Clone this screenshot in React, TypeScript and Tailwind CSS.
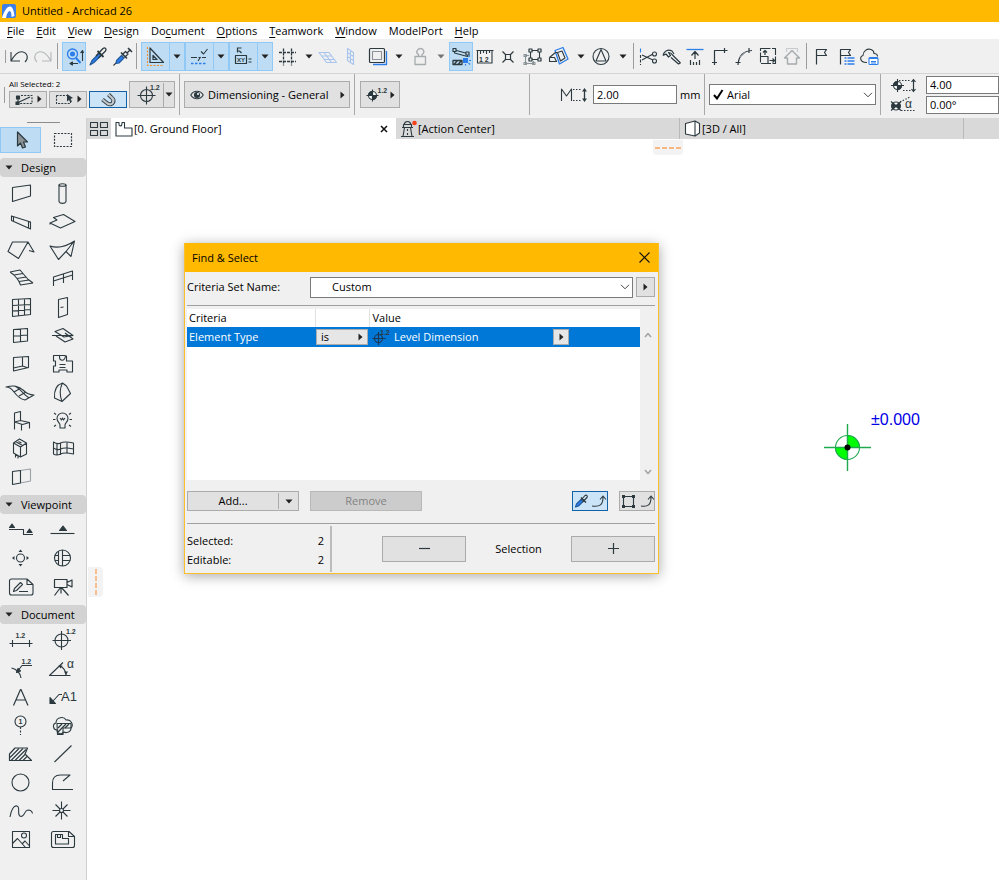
import type { ReactNode } from 'react';
import clsx from 'clsx';

const INK = '#2c3a40';
const BLUE = '#2b7de9';

/* ---------- shared bits ---------- */

function Svg({ w, h, children, stroke = INK }: { w: number; h: number; children: ReactNode; stroke?: string }) {
  return (
    <svg width={w} height={h} viewBox={`0 0 ${w} ${h}`} fill="none" stroke={stroke} strokeWidth="1.1" strokeLinejoin="round" className="block shrink-0" aria-hidden="true">
      {children}
    </svg>
  );
}

function Down() {
  return (
    <Svg w={8} h={5}>
      <path d="M0.5 0.5h7L4 4.5z" fill="#222" stroke="none" />
    </Svg>
  );
}

function Right() {
  return (
    <Svg w={5} h={8}>
      <path d="M0.5 0.5v7L4.5 4z" fill="#222" stroke="none" />
    </Svg>
  );
}

function Chevron() {
  return (
    <svg width="10" height="6" viewBox="0 0 10 6" fill="none" stroke="#444" className="pointer-events-none absolute right-[3px] top-1/2 -translate-y-1/2" aria-hidden="true">
      <path d="M1 0.8l4 4 4-4" />
    </svg>
  );
}

function Tiny({ x, y, children, size = 7 }: { x: number; y: number; children: ReactNode; size?: number }) {
  return (
    <text x={x} y={y} fontSize={size} fontWeight="700" fill={INK} stroke="none" fontFamily="Liberation Sans, sans-serif">
      {children}
    </text>
  );
}

/* ---------- menu ---------- */

const menus = [
  ['', 'F', 'ile'],
  ['', 'E', 'dit'],
  ['', 'V', 'iew'],
  ['', 'D', 'esign'],
  ['Do', 'c', 'ument'],
  ['', 'O', 'ptions'],
  ['', 'T', 'eamwork'],
  ['', 'W', 'indow'],
  ['ModelPort', '', ''],
  ['', 'H', 'elp'],
];

function MenuBar() {
  return (
    <nav className="flex h-[17px] items-center gap-3 bg-white pl-[7px]">
      {menus.map(([a, b, c]) => (
        <button key={a + b + c} className="whitespace-nowrap leading-4">
          {a}
          <span className="underline underline-offset-2">{b}</span>
          {c}
        </button>
      ))}
    </nav>
  );
}

/* ---------- toolbar ---------- */

function Tool({ label, active, children, stroke }: { label: string; active?: boolean; children: ReactNode; stroke?: string }) {
  return (
    <button aria-label={label} className={clsx('h-[29px] w-6 shrink-0', active && 'bg-[#bedcf3] outline outline-1 -outline-offset-1 outline-[#90c8f6]')}>
      <Svg w={24} h={29} stroke={stroke}>{children}</Svg>
    </button>
  );
}

function Caret({ label, dim }: { label: string; dim?: boolean }) {
  return (
    <button aria-label={label} className={clsx('flex h-[29px] w-4 shrink-0 items-center justify-center', dim && 'opacity-60')}>
      <Down />
    </button>
  );
}

function SplitTool({ label, children }: { label: string; children: ReactNode }) {
  return (
    <div className="flex h-[29px] shrink-0 border border-[#90c8f6] bg-[#bedcf3]">
      <button aria-label={label} className="flex w-7 items-center justify-center border-r border-[#90c8f6]">
        <Svg w={24} h={27}>{children}</Svg>
      </button>
      <button aria-label={`${label} options`} className="flex w-[14px] items-center justify-center">
        <Down />
      </button>
    </div>
  );
}

function Sep() {
  return <div className="mx-[2px] h-[26px] w-px shrink-0 bg-[#9c9c9c]" />;
}

function Gap() {
  return <div className="w-[2px] shrink-0" />;
}

function Toolbar() {
  return (
    <div className="flex h-[34px] items-center overflow-hidden bg-[#f0f0f0] pl-[5px]">
      <div className="mr-px h-[13px] w-px bg-[#9c9c9c]" />
      <Tool label="Undo">
        <path d="M4 10v9h9M4 19C8 12 12 9 16 10c5 1.5 5.5 7 2 10" />
      </Tool>
      <Tool label="Redo" stroke="#b4b8ba">
        <path d="M20 10v9h-9M20 19C16 12 12 9 8 10c-5 1.5-5.5 7-2 10" />
      </Tool>
      <Sep />
      <Gap />
      <Tool label="Zoom to selection" active>
        <circle cx="10.5" cy="12" r="5" stroke={BLUE} strokeWidth="1.3" />
        <circle cx="10.5" cy="12" r="2.5" fill={BLUE} stroke="none" />
        <path d="M14 16l4.5 5" stroke={BLUE} strokeWidth="2" />
        <path d="M20.5 19v-9M18.5 11l2-2.5 1 2.5M16 21.5H9M10.5 20L8 21.5l2.5 1.5z" fill={INK} />
      </Tool>
      <Tool label="Pick up parameters">
        <path d="M4 23l2-4.500 7-7 2 2-7 7z" fill={BLUE} stroke="#23599c" />
        <path d="M11.5 9l6 6" strokeWidth="1.800" />
        <path d="M10 14l7-7.5c2-1.5 4 .5 2.5 2.5L12.5 16" strokeWidth="1.3" />
      </Tool>
      <Tool label="Inject parameters">
        <path d="M3.5 23.5l4-4" />
        <path d="M6.5 18.5l5-5 2.5 2.5-5 5-3 .5z" fill={BLUE} stroke="#23599c" />
        <path d="M12 13l3.5-3.5L18 12l-3.5 3.5M17 11l3.5-3.5" strokeWidth="1.3" />
        <path d="M18 6l4 4M11 10.5l6 6" strokeWidth="1.6" />
      </Tool>
      <Sep />
      <Gap />
      <SplitTool label="Guide lines">
        <path d="M6 5v14.5h13.5zM9 12.5v4h4z" strokeWidth="1.2" />
        <path d="M3.5 4v18.5H20" stroke="#f28c28" strokeDasharray="2 1.5" />
      </SplitTool>
      <SplitTool label="Snap guides">
        <path d="M3 14.5h6M10.5 14.5h2M14 14.5h4M13 8.500l2.500 2.500 4-5" />
        <path d="M10 18l2.5-4" />
        <path d="M3 20.5h15" stroke={BLUE} strokeDasharray="2.5 1.5" strokeWidth="1.3" />
      </SplitTool>
      <SplitTool label="Tracker">
        <path d="M5.5 4.500v5M5 5h4.500M5.500 8h2L9.500 10M3.500 12.500h11v8h-11z" strokeWidth="1.2" />
        <Tiny x={5} y={19} size={6}>XY</Tiny>
        <path d="M16.5 16h3M16.5 19h3" />
      </SplitTool>
      <Gap />
      <Tool label="Grid snap">
        <path d="M8.5 6.5v17M16.5 6.5v17M4 10.5h17M4 19.500h17" strokeDasharray="3 1" strokeWidth="1.3" />
      </Tool>
      <Gap />
      <Caret label="Grid snap options" />
      <Tool label="Editing plane" stroke="#a9c5ee">
        <path d="M2 10.5h10l7.5 10h-10zM4.5 14h10M7 17.500h10M7 10.5l7.5 10" />
      </Tool>
      <Tool label="Vertical plane" stroke="#a9c5ee">
        <path d="M6.5 6.5l6 4v12l-6-4zM9.5 8.5v12M6.5 10.5l6 4M6.5 14.5l6 4" />
      </Tool>
      <Gap />
      <Tool label="Trace reference">
        <path d="M6 22.5h13.5V9" stroke={BLUE} strokeWidth="1.3" />
        <rect x="2.5" y="6.5" width="15" height="14" rx="1" strokeWidth="1.2" />
        <rect x="5.5" y="9.5" width="9" height="8" stroke="#8b9499" />
      </Tool>
      <Caret label="Trace options" />
      <Gap />
      <Tool label="Gravity" stroke="#a6abad">
        <path d="M6 14.5h10.5v8H6zM9.5 14.5v-2c-3.5-2-1-6 2-6s5 4 1.5 6v2" strokeWidth="1.3" />
      </Tool>
      <Caret label="Gravity options" dim />
      <Tool label="Suspend groups" active>
        <path d="M5.5 8l13 3.5v3L5.5 11z" />
        <path d="M4 6.5h3v3H4zM17 10h3v3h-3z" fill="#bedcf3" strokeWidth="1.2" />
        <path d="M4 18.5h9v4H4zM5 22.500l3.500-4M9 22.500l3.500-4" strokeWidth="1.3" />
        <rect x="14" y="16" width="5" height="5" fill={BLUE} stroke="none" />
        <path d="M19.5 15l1.5-1.500M19.500 21l1.500 1.500M20 18.500h2M16.500 22v1.500" stroke={BLUE} />
      </Tool>
      <Tool label="Measure">
        <path d="M4.5 8.5V21H19V8.5M3.5 8.5h17M7.5 8.5V12M10.5 8.5V11M13.5 8.5V12M16.5 8.5V11" />
        <Tiny x={6} y={19.5} size={7}>1 2</Tiny>
      </Tool>
      <Tool label="Intersect">
        <path d="M5.5 9.5l3 3M13.500 17.500l3 3M16.5 9.5l-3 3M8.500 17.500l-3 3M8.5 12.500h5v5h-5z" strokeWidth="1.2" />
      </Tool>
      <Tool label="Group">
        <path d="M9.5 8.5h9v9h-9z" />
        <path d="M8 7h3v3H8zM17 7h3v3h-3zM8 16h3v3H8zM17 16h3v3h-3z" fill="#f0f0f0" strokeWidth="1.2" />
        <path d="M4.500 13.5H8M4.5 13v8.5h8V19M3 12.5h2.5v2H3zM3 20.5h2.5v2H3zM11.5 20.500H14v2h-2.500z" stroke="#8b9499" />
      </Tool>
      <Gap />
      <Tool label="Cutaway">
        <path d="M8 8.5l8-3L21 17l-8.500 5z" stroke={BLUE} strokeWidth="1.3" />
        <path d="M2.5 15.5l6-5H10M2.5 15.5v4H10M2.5 15.5h5l2 4M10.5 10.500L15 9l3 7-4.500 3z" />
      </Tool>
      <Gap />
      <Caret label="Cutaway options" />
      <Tool label="Triangle marker">
        <circle cx="12" cy="14.5" r="8" />
        <path d="M12 7.5L17 19H7z" />
      </Tool>
      <Gap />
      <Caret label="Marker options" />
      <Sep />
      <Tool label="Split">
        <path d="M4.5 6.5v4" stroke={BLUE} />
        <path d="M4.5 13v10" strokeDasharray="3 1.5" />
        <path d="M6 13l11 5M6 18l11-6" />
        <circle cx="18.5" cy="12" r="2" />
        <circle cx="18.5" cy="19" r="2" />
      </Tool>
      <Tool label="Adjust">
        <path d="M3 13.500l3-1.500 2.500 3 2-1.500L8.500 10.500c2 0 3 .5 4 2.500l8 8M3 13.500C4 9 8 7 12 9l2 3M11 15.500l7.500 6.500 2-1" strokeWidth="1.2" />
      </Tool>
      <Tool label="Elevate">
        <path d="M2.5 7.5h17" stroke={BLUE} strokeWidth="1.3" />
        <path d="M11 17v-7M7.5 13.5l3.5-4 3.5 4M6.5 18v5M9.5 20v3M12.5 20v3M15.500 18v5" strokeWidth="1.2" />
      </Tool>
      <Tool label="Corner">
        <path d="M6.5 23V8.5h13M16.5 6v5M4 20.5h5" strokeWidth="1.2" />
      </Tool>
      <Tool label="Fillet">
        <path d="M6 23C6.500 15 10 9 20 8.500M17 6v5M3.500 20.500h5" strokeWidth="1.2" />
        <path d="M8 15l6-5.500" stroke="#8b9499" />
      </Tool>
      <Tool label="Resize">
        <path d="M4.5 6.5h15v15h-15z" strokeDasharray="10 1.5" />
        <path d="M4.5 14.500H12v7M9 13V8.5M7 10.5l2-2 2 2M13.5 18.5h5M16.5 16.5l2 2-2 2" strokeWidth="1.2" />
      </Tool>
      <Tool label="Roof trim" stroke="#a6abad">
        <path d="M6.500 10V6.5h11V10" stroke="#c8cbcc" />
        <path d="M7.5 22v-6h-3L12 8.5l7.500 7.500h-3v6z" strokeWidth="1.4" />
      </Tool>
      <Sep />
      <Tool label="Flag">
        <path d="M7.5 22.500v-15h10l-2 3 2 3h-10" strokeWidth="1.2" />
      </Tool>
      <Tool label="Issue list">
        <path d="M7.5 22.500v-15h10l-2 3 2 3h-10" strokeWidth="1.2" />
        <path d="M14.500 16h7M14.500 19h7M14.500 22h7M11.500 16h2M11.500 19h2M11.500 22h2" stroke={BLUE} strokeWidth="1.6" />
      </Tool>
      <Tool label="Cloud issues">
        <path d="M10 20.5c-7 .5-8-6-4-7 0-4 4-7.5 8-6 2 .7 3 2 3 4 2 0 3.500 1 3.500 3" />
        <rect x="12" y="15.500" width="9" height="7" rx="1" stroke={BLUE} fill="#fff" />
        <path d="M12 16.500h9M14 19.500h5M14 21h5" stroke={BLUE} strokeWidth="1.2" />
      </Tool>
    </div>
  );
}

/* ---------- info box ---------- */

const grayButton = 'flex items-center border border-[#ababab] bg-[#e1e1e1]';
const field = 'min-w-0 border border-[#7a7a7a] bg-white px-[3px] leading-4 outline-none';

function Rule() {
  return <div className="h-[41px] w-px shrink-0 self-start bg-[#a8a8a8]" />;
}

function InfoBar() {
  return (
    <div className="flex h-[45px] items-center overflow-hidden border-t border-[#d4d4d4] bg-[#f0f0f0] pb-[3px] pl-1">
      <div className="h-4 w-px shrink-0 bg-[#9c9c9c]" />
      <div className="ml-1 flex shrink-0 flex-col pb-[3px]">
        <span className="h-3 whitespace-nowrap text-[8px] leading-[10px]">All Selected: 2</span>
        <div className="flex gap-[2px]">
          <button aria-label="Selected elements" className={clsx(grayButton, 'h-[17px] w-[38px] justify-between px-1')}>
            <Svg w={22} h={13}>
              <path d="M4 4v5M4 9.5L16 4" />
              <path d="M2.5 3h3v3h-3z" fill={INK} />
              <rect x="2" y="9" width="3" height="2.5" fill={INK} />
              <path d="M7 2.5h11v8H6" strokeDasharray="2 1.2" />
            </Svg>
            <Right />
          </button>
          <button aria-label="Marquee selection" className={clsx(grayButton, 'h-[17px] w-[38px] justify-between px-1')}>
            <Svg w={22} h={13}>
              <path d="M2.5 2.5h11M2.5 2.5v8h14V9" strokeDasharray="2 1.2" />
              <path d="M13 1l6 4-2.500 1 1.500 2.500-1.500 1L15 7l-2 1.500z" fill={INK} stroke="none" />
            </Svg>
            <Right />
          </button>
          <button aria-label="Magnet" aria-pressed="true" className="flex h-[17px] w-[38px] items-center justify-center border border-[#1362a5] bg-[#cce4f7]">
            <Svg w={20} h={15}>
              <path d="M4.5 7.5l5 4c5 3 8-3 4-6l-3-3" strokeWidth="4" />
              <path d="M4.5 7.5l5 4c5 3 8-3 4-6l-3-3" stroke="#c2c9cd" strokeWidth="2.2" />
            </Svg>
          </button>
        </div>
      </div>
      <button aria-label="Level dimension settings" className={clsx(grayButton, 'ml-[2px] h-[27px] w-[46px] shrink-0')}>
        <span className="ml-[6px] flex w-[28px] border-r border-[#ababab]">
          <Svg w={27} h={24}>
            <circle cx="10.5" cy="12.5" r="6" />
            <path d="M10.5 3.5v18M1.5 12.5h18" />
            <Tiny x={14} y={7}>1.2</Tiny>
          </Svg>
        </span>
        <span className="ml-px"><Down /></span>
      </button>
      <div className="w-1 shrink-0" />
      <Rule />
      <button className={clsx(grayButton, 'ml-1 h-[27px] w-[166px] shrink-0 pl-[5px] pr-1')}>
        <Svg w={14} h={12}>
          <path d="M0.8 6C3.5 1 10.5 1 13.2 6 10.5 11 3.5 11 .8 6z" />
          <circle cx="7" cy="6" r="2.5" fill={INK} />
          <circle cx="8" cy="5" r="1" fill="#fff" stroke="none" />
        </Svg>
        <span className="ml-1 flex-1 whitespace-nowrap text-left">Dimensioning - General</span>
        <Right />
      </button>
      <div className="w-1 shrink-0" />
      <Rule />
      <button aria-label="Marker type" className={clsx(grayButton, 'ml-[5px] h-[27px] w-10 shrink-0 justify-between px-1')}>
        <Svg w={24} h={20}>
          <circle cx="7.5" cy="10.5" r="4" fill="#fff" />
          <path d="M7.5 10.5v-4a4 4 0 0 0-4 4zM7.500 10.500v4a4 4 0 0 0 4-4z" fill={INK} />
          <path d="M7.5 4.5v12M1.5 10.5h12" />
          <Tiny x={12.5} y={8} size={7}>1.2</Tiny>
        </Svg>
        <Right />
      </button>
      <div className="w-[129px] shrink-0" />
      <Rule />
      <label htmlFor="height" className="ml-[30px] mr-[5px] shrink-0" aria-label="Marker height">
        <Svg w={28} h={18}>
          <path d="M1.5 15V3l5 7 5-7v12" />
          <path d="M13 3.500h8M13 14.500h8" strokeDasharray="1.5 1.5" />
          <path d="M24.5 4v10" strokeWidth="1.3" />
          <path d="M24.5 2l2.500 3.500h-5zM24.500 16l2.500-3.500h-5z" fill={INK} stroke="none" />
        </Svg>
      </label>
      <input id="height" defaultValue="2.00" className={clsx(field, 'h-[19px] w-[84px] shrink-0')} />
      <span className="ml-[3px] w-6 shrink-0">mm</span>
      <Rule />
      <div className="relative ml-1 h-[21px] w-[167px] shrink-0">
        <select aria-label="Font" className="h-full w-full appearance-none border border-[#7a7a7a] bg-white pl-[17px] leading-4 outline-none">
          <option>Arial</option>
        </select>
        <svg width="11" height="11" viewBox="0 0 11 11" fill="none" stroke="#000" strokeWidth="2" className="pointer-events-none absolute left-1 top-[5px]" aria-hidden="true">
          <path d="M1 6l3 3.5L9.5 1" />
        </svg>
        <Chevron />
      </div>
      <div className="w-1 shrink-0" />
      <Rule />
      <div className="ml-2 flex min-w-[110px] flex-1 flex-col gap-[2px]">
        <div className="flex">
          <label htmlFor="marker-size" aria-label="Marker size" className="w-[37px] shrink-0">
            <Svg w={30} h={18}>
              <circle cx="8.5" cy="9.5" r="4" fill="#fff" />
              <path d="M8.5 9.5v-4a4 4 0 0 0-4 4zM8.500 9.500v4a4 4 0 0 0 4-4z" fill={INK} />
              <path d="M2 9.5h13M8.5 3v13" />
              <path d="M10 4.500h12M14 14.500h8" strokeDasharray="1.5 1.5" />
              <path d="M24.500 4v11M22.500 6l2-2.500 2 2.500M22.500 13l2 2.500 2-2.500" strokeWidth="1.2" />
            </Svg>
          </label>
          <input id="marker-size" defaultValue="4.00" className={clsx(field, 'h-[18px] flex-1')} />
        </div>
        <div className="flex">
          <label htmlFor="marker-angle" aria-label="Marker angle" className="w-[37px] shrink-0">
            <Svg w={30} h={18}>
              <circle cx="7" cy="10" r="4" fill="#fff" />
              <path d="M7 10L4 7a4 4 0 0 0 0 6zM7 10l3-3a4 4 0 0 1 0 6z" fill={INK} />
              <path d="M2 5.5l10 9M2 14.5l10-9" />
              <path d="M11 6l10-5M12 14.500h14" strokeDasharray="1.5 1.5" />
              <text x="16" y="12" fontSize="12" fill={INK} stroke="none" fontFamily="Liberation Sans, sans-serif">α</text>
            </Svg>
          </label>
          <input id="marker-angle" defaultValue="0.00°" className={clsx(field, 'h-[18px] flex-1')} />
        </div>
      </div>
    </div>
  );
}

/* ---------- toolbox ---------- */

type Item = [string, ReactNode];

const designTools: Item[] = [
  ['Wall', <path d="M12.5 8.5l18-2.500v11l-18 5.500z" />],
  ['Column', <><ellipse cx="21.5" cy="6" rx="3.5" ry="1.3" /><path d="M18 6v16.5c1 2.5 6 2.5 7 0V6" /></>],
  ['Beam', <path d="M11.5 8l19 6v7l-19-8.500zM11.500 8l2 .8v4.500M28.500 13.500V20" />],
  ['Slab', <path d="M9 15l7-3-3.500-2.500 10-3L34 13.500 19.500 20zM9 15v1.500" />],
  ['Roof', <path d="M8 15.500L12.500 6H28l-9.500 16.500zM28 6l6 10-5-1.500" />],
  ['Shell', <path d="M9 10c9 3 17 0 24.500-5L30 20.500l-5-5-7.500 8zM33 5.500l-8 10" />],
  ['Stair', <path d="M10 8l10-2 3 3.500M10 8l4 3 9-1.500 3 3.500M14 11l3 3.500 9-1.500 3 3.500M17 14.500l2 3 10-1.500 4 3M19 17.500l1.500 3.500L33 19" />],
  ['Railing', <path d="M12.5 22v-9l19-6v9M12.500 17l19-6M22.500 10v9" />],
  ['Curtain Wall', <path d="M12.500 6.500l18-1v16l-18 2zM18.500 6.500v16M24.500 6v16M12.500 12.500l18-1M12.500 18l18-1.500" />],
  ['Door', <path d="M17.500 6.500l9-2v17l-9 3zM19.500 14.500l3-.5" />],
  ['Window', <path d="M13.500 8.500l14-1V20l-14 1.500zM20.500 8v13M13.500 15l14-1" />],
  ['Skylight', <path d="M14 10.500l8-3 10 7-9 1.500zM11 14.500h21M15 15l9 6 8-3-8-6" />],
  ['Corner Window', <path d="M13.500 8.500l15-1v11l-15 3.500zM22.500 8v9l6 2M22.500 17l-9 2" />],
  ['Zone', <path d="M12.500 6.500h6v1.500c0 4 5 5 6-1h1v5h6v11h-5.500v-2h-8v2h-5.500v-6h2v-5h-2zM18.500 15.500h6M18.500 18.500h6M24.500 6.500h-6" />],
  ['Mesh', <path d="M6 9c8-2 12-1 17 3 4 4 7 5 11 5l-9 5c-5-1-8-4-11-8-2-3-4-5-8-5zM14 8c5 1 9 8 15 12M21 10l-7 4M26 14l-7 4" />],
  ['Morph', <path d="M13.500 20C13 12 15 7 21.500 5l4 3 4 7.500-8.500 8zM21.500 5c-3 6-3 12-.5 18.500" />],
  ['Object', <path d="M14.500 16V7l6-1.500V15M14.500 16l8 2.500 7-2-9-2zM14.500 16v7.500M21.500 18.500v6M29.500 16.500v6" />],
  ['Lamp', <><path d="M19 19c0-2-3-3-3-6.500a5.500 5.500 0 0 1 11 0C27 16 24 17 24 19v3h-5zM19 12l1.500 2 1-2 1 2 1.500-2" /><path d="M12 13.500h2.500M28.500 13.500H31M13 7l2 1.500M30 7l-2 1.500M13 20.500l2-1.500M30 20.500L28 19" /></>],
  ['Equipment', <path d="M13.500 9l6-4 7 4v11l-6 3-7-4zM13.500 9l7 4 6-4M20.500 13v10M15.500 7.500l7 4M15.500 20.500v3M18 22v2.500M18.500 7.500l3 1.500" />],
  ['Curved Wall', <path d="M12.500 8c3 2 5 2 7 1s8-1 13 0v11c-5-1-11-1-13 0s-4 2-7 0zM12.500 14c3 2 5 2 7 1s8-1 13 0M19.500 9v12M26 8.500v11M16 9.500v11" />],
  ['Opening', <><path d="M20.500 7.500l10-1.500v12l-10 2" stroke="#9aa3a7" /><path d="M12.500 8.500l8-1V20l-8 1.500z" /></>],
];

const viewpointTools: Item[] = [
  ['Section', <><path d="M9 13.5h14.500v5H33" /><path d="M9.500 11.500L12 8l2.500 3.500zM27 16.500l2.500-3.500 2.500 3.500z" fill={INK} /></>],
  ['Elevation', <><path d="M9.500 17.5h24" /><path d="M18.500 14.500L22 10l3.500 4.500z" fill={INK} /></>],
  ['Interior Elevation', <><circle cx="20.5" cy="14" r="4" /><path d="M20.500 5.500l2 2.500h-4zM20.500 22.500l2-2.500h-4zM12 14l2.500-2v4zM29 14l-2.500-2v4z" fill={INK} stroke="none" /></>],
  ['3D Document', <><circle cx="21.500" cy="14" r="8" /><path d="M17.500 7v14M21.500 6v16M21.500 11.500H29M21.500 16.500H29M17.500 11.500H14M17.500 16.500H14" /></>],
  ['Worksheet', <><path d="M9.500 8q0-2 2-2H27l6 5.500V20q0 2-2 2H11.500q-2 0-2-2zM27 6v5.500h6" /><path d="M13.500 18.500l1-3 6-6 2 2-6 6zM19 18.500h9" /></>],
  ['Camera', <path d="M13.500 6.500H26v8H13.500zM26 9.500L31 7v7l-5-2.500M19.500 14.500l-6 8M20.500 14.500l7 8M20 14.500v6" strokeWidth="1.2" />],
];

const documentTools: Item[] = [
  ['Dimension', <><Tiny x={15.5} y={12}>1.2</Tiny><path d="M9.500 17.500h23M12.500 14v7M29.500 14v7" /></>],
  ['Level Dimension', <><circle cx="20.500" cy="14.500" r="6.500" /><path d="M20.500 5v19M11.500 14.500H30" /><Tiny x={25} y={8}>1.2</Tiny></>],
  ['Radial Dimension', <><Tiny x={21.5} y={9}>1.2</Tiny><path d="M11.500 13c5 1 9 5 9.500 10M17 17l5-6.500h10" /><path d="M16.500 17.500l1.500-4 2.500 2.500z" fill={INK} /></>],
  ['Angle Dimension', <><path d="M22 7.500l-13.500 13h21M19 11c3 1 6 5 6 9" /><path d="M17.500 10.500h4l-2 3zM23 16.500h4l-2 3.500z" fill={INK} stroke="none" /><text x="26" y="13" fontSize="12" fill={INK} stroke="none" fontFamily="Liberation Sans, sans-serif">α</text></>],
  ['Text', <path d="M13.500 22.500l7-16h.5l7 16M16 17h9.500" strokeWidth="1.2" />],
  ['Label', <><path d="M12 18l6-6.500h3" /><path d="M9 20.500v-6l5.500 6z" fill={INK} /><text x="20" y="18" fontSize="13" fill={INK} stroke="none" fontFamily="Liberation Sans, sans-serif">A1</text></>],
  ['Grid Element', <><circle cx="20.500" cy="9.500" r="5.500" /><Tiny x={18.5} y={12}>1</Tiny><path d="M20.500 15v8" strokeDasharray="2 1.5" /></>],
  ['Change', <><path d="M16 18c-4 0-5-6-1-7 0-6 8-7 10-3 5-1 8 5 5 8 0 5-6 5-7 4-3 3-7 2-7-2z" /><path d="M16 11.500h14V16h-8v6.500h-5.500z" /><path d="M17 16l4-4M17 20l8-8M24 16l4-4" strokeWidth="1.3" /></>],
  ['Fill', <><path d="M9.500 20.500V14L15 8h12.500L25 14l6.500 6.500z" strokeWidth="1.2" /><path d="M10 17.500l9-9M11 20.500l12-12M15 20.500l11-11M19 20.500l6-6M23 20.500l4-4" /></>],
  ['Line', <path d="M13.500 22l17-16.500" />],
  ['Circle', <circle cx="20.500" cy="13.500" r="8.500" />],
  ['Polyline', <path d="M32 20.500H11.500V14c0-5 3-8 8-8H29l-7 6" />],
  ['Spline', <path d="M10 20c1-7 4-12 7-11 4 1-1 10 4 10.500 4 0 3-6 7-6.500 2 0 4 1 4.500 3.500" />],
  ['Hotspot', <><circle cx="20.500" cy="13.500" r="2" /><path d="M20.500 4.500v7M20.500 15.500v7M11.500 13.500h7M22.500 13.500h7M14.500 7.500L19 12M26.500 7.500L22 12M14.500 19.500L19 15M26.500 19.500L22 15" /></>],
  ['Figure', <><rect x="12.500" y="5.500" width="17" height="16" /><circle cx="24" cy="9.500" r="2.500" /><path d="M12.500 17.500l5-5 8 9M22 18l3-3 4.500 5" /></>],
  ['Drawing', <><path d="M10.500 7.500q0-2 2-2H28l5.500 5v9q0 2-2 2h-19q-2 0-2-2zM27.500 5.500v5h6" /><path d="M14.500 8.500h7v4h6V18h-13zM16.500 8.500v3h3v-3" /></>],
];

function ToolSection({ title, items, className }: { title: string; items: Item[]; className: string }) {
  return (
    <section>
      <h2>
        <button className="flex h-[19px] w-full items-center gap-2 rounded-sm bg-[#d3d3d3] pl-[5px] text-left font-normal">
          <Down />
          {title}
        </button>
      </h2>
      <div className={clsx('mb-1 mt-[2px] grid w-[82px] auto-rows-fr grid-cols-2', className)}>
        {items.map(([name, icon]) => (
          <button key={name} aria-label={name} className="flex items-center justify-center">
            <Svg w={41} h={28}>{icon}</Svg>
          </button>
        ))}
      </div>
    </section>
  );
}

function Toolbox() {
  return (
    <aside className="w-[87px] shrink-0 border-r border-[#d0d0d0] bg-[#f0f0f0]">
      <div className="flex h-[9px] justify-center pt-1">
        <div className="h-px w-[33px] bg-[#8c8c8c]" />
      </div>
      <div className="mb-[5px] grid w-[82px] grid-cols-2">
        <button aria-label="Arrow" className="h-[26px] border border-[#90c8f6] bg-[#bedcf3]">
          <Svg w={39} h={24}>
            <path d="M16.500 4v14l3-3 2 5 3-1-2-5h4z" fill="#8b9296" strokeWidth="1.2" />
          </Svg>
        </button>
        <button aria-label="Marquee" className="h-[26px]">
          <Svg w={41} h={26}>
            <rect x="13.5" y="6.5" width="17" height="13" strokeDasharray="2 1.3" strokeWidth="1.2" />
          </Svg>
        </button>
      </div>
      <ToolSection title="Design" items={designTools} className="h-[312px]" />
      <ToolSection title="Viewpoint" items={viewpointTools} className="h-[85px]" />
      <ToolSection title="Document" items={documentTools} className="h-[228px]" />
    </aside>
  );
}

/* ---------- tabs ---------- */

function TabBar() {
  return (
    <div className="flex h-[21px] bg-[#d9d9d9]">
      <button aria-label="Tab overview" className="flex w-6 shrink-0 items-center justify-center">
        <Svg w={18} h={16}>
          <path d="M0.5 1.5h7v5h-7zM10.5 1.5h7v5h-7zM0.5 9.5h7v5h-7zM10.5 9.5h7v5h-7z" />
        </Svg>
      </button>
      <div className="flex w-[285px] items-center bg-white pl-1">
        <Svg w={18} h={16}>
          <path d="M1 1.5h3v2c0 2 3 2 3-1v-1h2.500V7H17v8H1z" />
        </Svg>
        <button className="ml-px flex-1 text-left">[0. Ground Floor]</button>
        <button aria-label="Close tab" className="mr-2">
          <Svg w={8} h={8} stroke="#111"><path d="M1 1l6 6M7 1L1 7" strokeWidth="1.5" /></Svg>
        </button>
      </div>
      <button className="flex w-[284px] items-center border-r border-[#b9b9b9] pl-1 text-left">
        <Svg w={18} h={19}>
          <path d="M3 17.500l1.500-9h6l1.500 9M1 17.500h13M2 8.500h11M3.500 8.500v-3h8v3M4 5.500c1-4 6-4 7 0M7.500 10v2M7.500 14v2" />
          <circle cx="14.5" cy="4" r="2.300" fill="#f4411e" stroke="none" />
        </Svg>
        <span>[Action Center]</span>
      </button>
      <button className="flex w-[284px] items-center border-r border-[#b9b9b9] pl-1 text-left">
        <Svg w={18} h={17}>
          <path d="M1.5 3.5L11 1l4.500 2.500V13L11 16l-9.500-2zM11 1v15" fill="#fff" />
        </Svg>
        <span>[3D / All]</span>
      </button>
    </div>
  );
}

/* ---------- find & select ---------- */

function FindSelect() {
  return (
    <div role="dialog" aria-label="Find & Select" className="absolute left-[97px] top-[104px] w-[475px] border border-t-0 border-[#fbbf2a] bg-[#f0f0f0] shadow-[0_2px_12px_rgba(0,0,0,0.35)]">
      <div className="flex h-[29px] items-center justify-between bg-[#ffb900] pl-[7px] pr-2">
        <span>Find &amp; Select</span>
        <button aria-label="Close">
          <Svg w={11} h={11} stroke="#111"><path d="M0.5 0.5l10 10M10.5 0.5l-10 10" /></Svg>
        </button>
      </div>
      <div className="pl-[2px] pr-[3px]">
        <div className="flex h-[34px] items-center border-b border-[#a0a0a0] pb-[3px]">
          <label htmlFor="criteria-set" className="w-[123px]">Criteria Set Name:</label>
          <div className="relative h-[21px] flex-1">
            <select id="criteria-set" className="h-full w-full appearance-none border border-[#7a7a7a] bg-white pl-[21px] leading-4 outline-none">
              <option>Custom</option>
            </select>
            <Chevron />
          </div>
          <button aria-label="Criteria set options" className={clsx(grayButton, 'ml-[3px] h-5 w-[19px] justify-center')}>
            <Right />
          </button>
        </div>

        <div className="mt-[3px] flex h-[171px]">
          <div className="flex-1 bg-white">
            <table className="w-full table-fixed border-collapse text-left">
              <thead>
                <tr className="h-[18px]">
                  <th className="w-[128px] border-r border-[#e2e2e2] py-0 pl-[2px] font-normal leading-4">Criteria</th>
                  <th className="w-[54px] border-r border-[#e2e2e2] p-0" aria-label="Operator" />
                  <th className="py-0 pl-[3px] font-normal leading-4">Value</th>
                </tr>
              </thead>
              <tbody>
                <tr className="h-5 bg-[#0078d7] text-white">
                  <td className="py-0 pl-[2px]">Element Type</td>
                  <td className="p-0">
                    <button className="ml-px flex h-4 w-[52px] items-center justify-between border border-[#ababab] bg-[#e6e6e6] px-1 leading-[14px] text-black">
                      is
                      <Right />
                    </button>
                  </td>
                  <td className="p-0">
                    <div className="flex items-center pl-px">
                      <Svg w={24} h={20} stroke="#1c3550">
                        <circle cx="8.5" cy="11.5" r="4" />
                        <path d="M8.5 5v13M2.5 11.5h13" />
                        <Tiny x={10} y={8}>1.2</Tiny>
                      </Svg>
                      <span className="w-[159px]">Level Dimension</span>
                      <button aria-label="Choose value" className="flex h-4 w-4 items-center justify-center border border-[#ababab] bg-[#e6e6e6]">
                        <Right />
                      </button>
                    </div>
                  </td>
                </tr>
              </tbody>
            </table>
          </div>
          <div className="flex w-[15px] flex-col items-center justify-between pb-1 pt-[22px]">
            <Svg w={8} h={8} stroke="#a5a5a5"><path d="M1 6l3-3.500L7 6" strokeWidth="1.6" /></Svg>
            <Svg w={8} h={8} stroke="#a5a5a5"><path d="M1 2l3 3.500L7 2" strokeWidth="1.6" /></Svg>
          </div>
        </div>

        <div className="flex h-11 items-center border-b border-[#a0a0a0] pb-px">
          <div className={clsx(grayButton, 'h-5 w-[112px]')}>
            <button className="flex-1">Add...</button>
            <button aria-label="Add options" className="flex h-4 w-[20px] items-center justify-center border-l border-[#ababab]">
              <Down />
            </button>
          </div>
          <button disabled className="ml-[11px] h-5 w-[112px] border border-[#b8b8b8] bg-[#cccccc] text-[#838383]">Remove</button>
          <div className="flex-1" />
          <button aria-label="Copy settings" aria-pressed="true" className="h-5 w-9 border border-[#1362a5] bg-[#cce4f7]">
            <Svg w={34} h={18}>
              <path d="M2.500 15l1-3L8 7.500l2 2L5.500 14z" fill={BLUE} stroke="#23599c" />
              <path d="M8 5.500l5 5" strokeWidth="1.5" />
              <path d="M8 8l4-4.500c1.500-1 3 .5 2 2L9.500 10" />
              <path d="M19 14c8 1 11-1 11-9M27 7.500L30 4l3 3.500" />
            </Svg>
          </button>
          <button aria-label="Copy geometry" className={clsx(grayButton, 'ml-[11px] h-5 w-9')}>
            <Svg w={34} h={18}>
              <path d="M3.500 4.500h10v10h-10z" />
              <path d="M2 3h3v3H2zM12 3h3v3h-3zM2 13h3v3H2zM12 13h3v3h-3z" fill={INK} stroke="none" />
              <path d="M21 14c7 1 10-1 10-9M28 7.500L31 4l3 3.500" />
            </Svg>
          </button>
        </div>

        <div className="flex h-[49px] items-center">
          <dl className="grid w-[145px] grid-cols-[1fr_auto] gap-y-[3px] border-r-2 border-[#bcbcbc] pb-[4px] pr-[6px] pt-[7px] leading-4">
            <dt>Selected:</dt>
            <dd>2</dd>
            <dt>Editable:</dt>
            <dd>2</dd>
          </dl>
          <button aria-label="Remove from selection" className={clsx(grayButton, 'ml-[50px] h-[26px] w-[84px] justify-center')}>
            <Svg w={11} h={11}><path d="M0 5.500h11" strokeWidth="1.2" /></Svg>
          </button>
          <span className="flex-1 text-center">Selection</span>
          <button aria-label="Add to selection" className={clsx(grayButton, 'h-[26px] w-[84px] justify-center')}>
            <Svg w={11} h={11}><path d="M0 5.500h11M5.500 0v11" strokeWidth="1.2" /></Svg>
          </button>
        </div>
      </div>
    </div>
  );
}

/* ---------- drawing area ---------- */

function Canvas() {
  return (
    <main className="relative flex-1 overflow-hidden bg-white">
      <div className="absolute left-[566px] top-px flex h-[15px] w-[30px] items-center justify-center rounded-b bg-[#f3f3f3]">
        <Svg w={26} h={2} stroke="#f9a45c"><path d="M0 1h26" strokeDasharray="5 2" strokeWidth="1.3" /></Svg>
      </div>
      <div className="absolute left-px top-[428px] flex h-[30px] w-[15px] items-center justify-center rounded-r bg-[#f3f3f3]">
        <Svg w={2} h={26} stroke="#f9a45c"><path d="M1 0v26" strokeDasharray="5 2" strokeWidth="1.3" /></Svg>
      </div>
      <div className="absolute left-[737px] top-[285px]">
        <Svg w={47} h={47} stroke="#1faa50">
          <circle cx="23.5" cy="23.5" r="12" fill="#fff" />
          <path d="M23.5 23.5v-12a12 12 0 0 1 12 12zM23.5 23.5v12a12 12 0 0 1-12-12z" fill="#00ff00" />
          <path d="M23.5 0v47M0 23.5h47" strokeWidth="1.4" />
          <circle cx="23.5" cy="23.5" r="3" fill="#000" stroke="none" />
        </Svg>
      </div>
      <span className="absolute left-[784px] top-[271px] font-['Liberation_Sans',Arial,sans-serif] text-base leading-5 text-[#0000e6]">±0.000</span>
      <FindSelect />
    </main>
  );
}

export default function App() {
  return (
    <div className="flex min-h-screen flex-col bg-[#f0f0f0] font-['Open_Sans','Noto_Sans',sans-serif] text-[11px] leading-4 text-black">
      <header className="flex h-[22px] items-center gap-[6px] bg-[#ffb900] pl-[2px]">
        <Svg w={14} h={14}>
          <rect width="14" height="14" rx="2" fill="#3f7fe8" stroke="none" />
          <path d="M0 14C2 7 5 2.5 8 2.500c3 .5 4 5 4.500 9.500l-3 1C9.500 9 9 7 7.500 7 5.500 8 4.500 11 4 14z" fill="#fff" stroke="none" />
        </Svg>
        <h1>Untitled - Archicad 26</h1>
      </header>
      <MenuBar />
      <Toolbar />
      <InfoBar />
      <div className="flex flex-1">
        <Toolbox />
        <div className="flex min-w-0 flex-1 flex-col">
          <TabBar />
          <Canvas />
        </div>
      </div>
    </div>
  );
}
